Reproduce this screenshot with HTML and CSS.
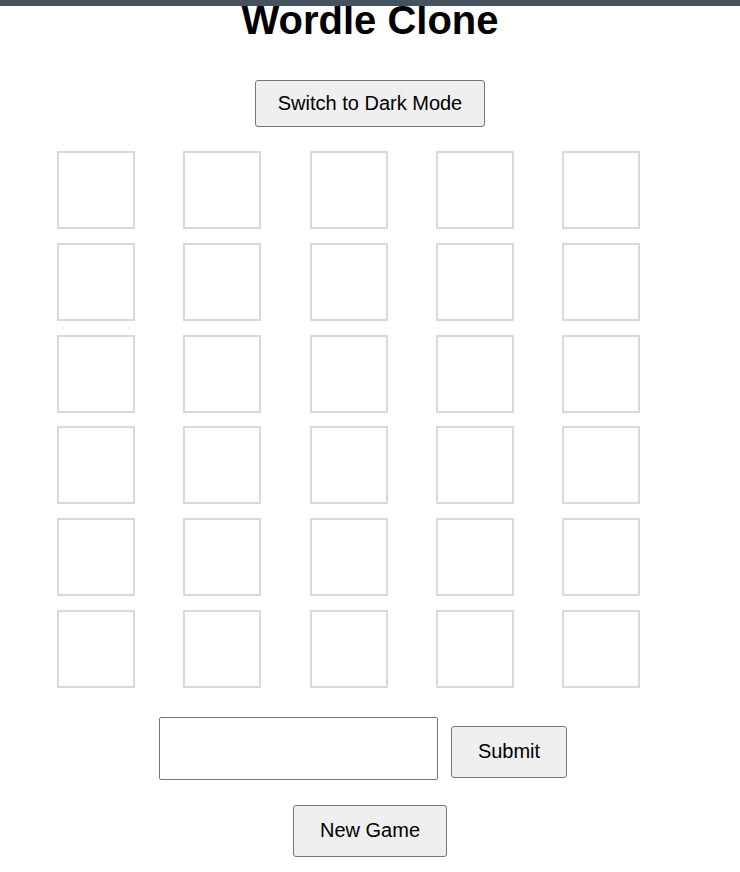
FILE: index.html
```html
<!DOCTYPE html>
<html lang="en">
<head>
<meta charset="utf-8">
<title>Wordle Clone</title>
<link rel="stylesheet" href="styles.css">
</head>
<body>
<div class="topbar"></div>
<main class="app">
  <h1 class="title">Wordle Clone</h1>
  <button class="btn btn-mode" type="button">Switch to Dark Mode</button>
  <div class="board">
    <div class="tile"></div><div class="tile"></div><div class="tile"></div><div class="tile"></div><div class="tile"></div>
    <div class="tile"></div><div class="tile"></div><div class="tile"></div><div class="tile"></div><div class="tile"></div>
    <div class="tile"></div><div class="tile"></div><div class="tile"></div><div class="tile"></div><div class="tile"></div>
    <div class="tile"></div><div class="tile"></div><div class="tile"></div><div class="tile"></div><div class="tile"></div>
    <div class="tile"></div><div class="tile"></div><div class="tile"></div><div class="tile"></div><div class="tile"></div>
    <div class="tile"></div><div class="tile"></div><div class="tile"></div><div class="tile"></div><div class="tile"></div>
  </div>
  <div class="controls">
    <input class="guess" type="text" maxlength="5" aria-label="Guess">
    <button class="btn btn-submit" type="button">Submit</button>
  </div>
  <button class="btn btn-new" type="button">New Game</button>
</main>
</body>
</html>
```
FILE: styles.css
```css
html, body {
  margin: 0;
  padding: 0;
  background: #ffffff;
}

body {
  font-family: "Liberation Sans", Arial, sans-serif;
  color: #000;
}

.topbar {
  position: absolute;
  top: 0;
  left: 0;
  right: 0;
  height: 6px;
  background: #44535d;
  z-index: 2;
}

.app {
  display: flex;
  flex-direction: column;
  align-items: center;
  padding: 0 8px;
}

.title {
  margin: 0;
  font-size: 40px;
  line-height: 40px;
  font-weight: bold;
  text-align: center;
}

.btn {
  font-family: "Liberation Sans", Arial, sans-serif;
  font-size: 20px;
  line-height: 23px;
  color: #000;
  background: #efefef;
  border: 1px solid #767676;
  border-radius: 3px;
  cursor: pointer;
}

.btn-mode {
  margin-top: 40px;
  padding: 11px 22px;
}

.board {
  margin-top: 24px;
  width: 626px;
  display: grid;
  grid-template-columns: repeat(5, 1fr);
  grid-auto-rows: 78px;
  column-gap: 5.25px;
  row-gap: 13.8px;
}

.tile {
  width: 78px;
  height: 78px;
  box-sizing: border-box;
  border: 2px solid #d9d9d9;
}

.controls {
  margin-top: 29px;
  display: flex;
  align-items: flex-end;
  gap: 13px;
  padding-right: 14px;
}

.guess {
  box-sizing: border-box;
  width: 279px;
  height: 63px;
  border: 1px solid #767676;
  border-radius: 2px;
  font-size: 20px;
  font-family: "Liberation Sans", Arial, sans-serif;
  padding: 0 10px;
}

.btn-submit {
  padding: 13.5px 26px;
  margin-bottom: 2px;
}

.btn-new {
  margin-top: 25px;
  padding: 13.5px 26px;
}
```
